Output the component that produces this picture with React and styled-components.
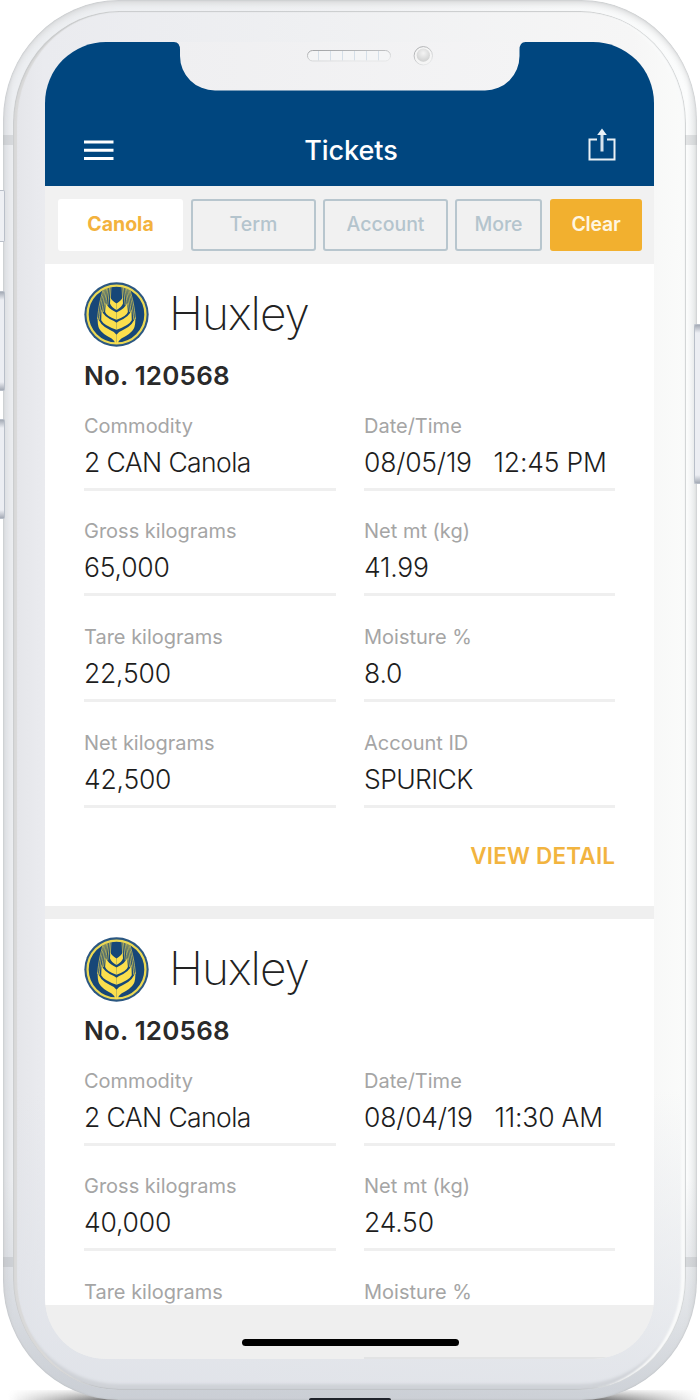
import React from "react";
import styled, { createGlobalStyle, css } from "styled-components";

const GlobalStyle = createGlobalStyle`
  *, *::before, *::after { box-sizing: border-box; }
  html, body { margin: 0; padding: 0; background: #fff; overflow: hidden; }
  body { font-family: Inter, "Liberation Sans", sans-serif; color: #222; }
`;

const Stage = styled.main`
  position: relative;
  width: 700px;
  height: 1400px;
  padding: 0 3px;
  overflow: hidden;
  isolation: isolate;
`;

const GroundShadow = styled.div`
  position: absolute;
  z-index: -2;
  left: 8px;
  right: 0;
  bottom: 0;
  height: 10px;
  background: linear-gradient(90deg, transparent 0, #777 14%, #555 50%, #777 86%, transparent 100%);
  mask-image: linear-gradient(180deg, rgba(0, 0, 0, 0.15), #000);
`;

const SideKey = styled.div`
  position: absolute;
  z-index: 1;
  top: ${(p) => p.$top}px;
  height: ${(p) => p.$height}px;
  border: 1px solid #b9bfc9;
  background: linear-gradient(180deg, #a4aab5 0, #eceef3 8px, #eceef3 calc(100% - 8px), #a4aab5 100%);
  ${(p) =>
    p.$right
      ? css`
          right: 0;
          width: 6px;
          border-right: 0;
          border-radius: 2px 0 0 2px;
        `
      : css`
          left: 0;
          width: 5px;
          border-left: 0;
          border-radius: 0 2px 2px 0;
        `}
  ${(p) => p.$flat && css`background: #eef0f4;`}
`;

const Chassis = styled.div`
  position: relative;
  width: 694px;
  height: 1400px;
  padding: 11px 11px 10px 10px;
  border-radius: 116px / 120px;
  background:
    linear-gradient(180deg, transparent 1180px, rgba(190, 195, 203, 0.75) 1400px),
    linear-gradient(90deg, #dfe1e5 0, #eceef1 10px, #f0f1f3 50%, #fbfcfc 684px, #e8eaeb 100%);
  box-shadow: inset 0 0 2px #aeb2b5, inset 0 3px 6px #d5d6d7;
`;

const AntennaBand = styled.i`
  position: absolute;
  top: ${(p) => p.$top}px;
  ${(p) => (p.$right ? "right: 0; width: 12px;" : "left: 0; width: 10px;")}
  height: 10px;
  background: rgba(160, 163, 166, 0.27);
`;

const Bezel = styled.div`
  height: 1379px;
  padding: 31px 30px 31px 32px;
  border-radius: 106px / 112px;
  background:
    linear-gradient(180deg, transparent 1080px, rgba(223, 226, 232, 0.88) 1379px),
    linear-gradient(90deg, #e4e5e9 0, #eaebef 30px, #eff0f2 45%, #f6f6f6 92%, #fafbfa 100%);
  box-shadow: inset 1px 1px 1px #c9cbcc, inset 5px 0 1px -1px #d9d9d9, inset -1px 0 1px #cfd2d3,
    inset -6px 0 2px -1px #f9fafa, inset 0 -1px 1px #babec3, inset 0 -7px 3px -1px #cfd2d7;
`;

const Screen = styled.div`
  position: relative;
  display: flex;
  flex-direction: column;
  width: 608.7px;
  height: 1317px;
  margin-left: 0.3px;
  border-radius: 61px;
  background: #efefef;
  overflow: hidden;
`;

const Notch = styled.svg`
  position: absolute;
  top: 0;
  left: 127px;
  width: 355px;
  height: 49px;
`;

const Header = styled.header`
  flex: none;
  display: grid;
  grid-template-columns: 32px 1fr 32px;
  align-items: center;
  height: 143.5px;
  padding: 71px 37px 0 38.7px;
  background: #00467f;
  color: #fff;
`;

const Title = styled.h1`
  margin: 4px 0 0 1px;
  font-size: 27px;
  font-weight: 550;
  line-height: 32px;
  letter-spacing: -0.05px;
  text-align: center;
`;

const MenuIcon = styled.svg`
  width: 30px;
  height: 21px;
  margin-top: 2px;
`;

const ShareIcon = styled.svg`
  width: 28px;
  height: 34px;
  margin: -9px 0 0 3.5px;
`;

const Filters = styled.nav`
  flex: none;
  display: flex;
  gap: 7px;
  height: 78px;
  padding: 13.5px 12.7px 13px;
  background: #f1f1f1;
`;

const Chip = styled.button`
  flex: none;
  width: ${(p) => p.$width}px;
  height: 52px;
  padding: 0 0 2px;
  border: 2px solid #b8c6ce;
  border-radius: 3px;
  background: transparent;
  color: #b4c4cd;
  font: 550 19.5px/24px Inter, sans-serif;
  letter-spacing: 0;
  ${(p) => p.$kind === "selected" && css`border-color: #fff; background: #fff; color: #f3b23d; font-weight: 700; margin-right: 1px;`}
  ${(p) => p.$kind === "action" && css`border-color: #f2b02f; background: #f2b02f; color: #fff6e2; font-weight: 600; margin-left: 1px; letter-spacing: -0.2px;`}
`;

const TicketList = styled.section`
  flex: none;
  display: flex;
  flex-direction: column;
  gap: 13px;
  height: 1041px;
  overflow: hidden;
`;

const Ticket = styled.article`
  flex: none;
  height: 645px;
  padding: 17.5px 38.7px 0 38.7px;
  background: #fff;
  &:first-child { height: 642px; }
  & + & { padding-top: 20.5px; }
  & + & { padding-top: 17.5px; }
`;

const Station = styled.div`
  display: flex;
  align-items: center;
  gap: 20px;
  height: 66px;
`;

const Emblem = styled.svg`
  flex: none;
  width: 65px;
  height: 65px;
`;

const StationName = styled.h2`
  margin: -2px 0 0;
  font-size: 46px;
  font-weight: 170;
  line-height: 56px;
  letter-spacing: -1px;
  color: #222;
`;

const TicketNumber = styled.h3`
  margin: 11.5px 0 21px;
  font-size: 26px;
  font-weight: 600;
  line-height: 34px;
  letter-spacing: 0.2px;
  color: #2a2a2a;
`;

const Fields = styled.dl`
  display: grid;
  grid-template-columns: 252px 251px;
  column-gap: 28px;
  row-gap: 28.7px;
  margin: 0;
`;

const Field = styled.div`
  height: 77px;
  border-bottom: 3px solid #efefef;
  white-space: pre;
`;

const Label = styled.dt`
  font-size: 20px;
  line-height: 24px;
  letter-spacing: 0;
  color: #a5a5a5;
`;

const Value = styled.dd`
  margin: 8.3px 0 0;
  font-size: 26.5px;
  font-weight: 320;
  line-height: 32px;
  letter-spacing: ${(p) => (p.$numeric ? "-0.2px" : "-0.6px")};
  color: #1d1d1d;
`;

const DetailLink = styled.a`
  display: block;
  margin-top: 33px;
  font-size: 22.5px;
  font-weight: 600;
  line-height: 30px;
  letter-spacing: 0.2px;
  text-align: right;
  color: #f2b43f;
`;

const HomeBar = styled.footer`
  flex: 1;
  display: flex;
  flex-direction: column;
  align-items: center;
  padding-top: 34.5px;
  background: #efefef;
`;

const HomeIndicator = styled.div`
  width: 217px;
  height: 7px;
  margin-left: 1px;
  border-radius: 4px;
  background: #000;
`;

const HiddenRule = styled.div`
  align-self: flex-end;
  width: 290px;
  height: 2px;
  margin-top: 10.5px;
  background: #e2e3e4;
`;

const Port = styled.div`
  position: absolute;
  left: 309px;
  bottom: 0;
  width: 82px;
  height: 2px;
  border-radius: 5px 5px 0 0;
  background: #20242c;
`;

const awns = ["M42 114C44 78 52 48 58 26", "M47 116C49 80 57 45 62 22", "M55 92C58 64 62 40 66 20", "M60 92C63 64 67 38 70 18", "M67 72C69 52 72 34 74 17", "M73 72C75 52 77 34 79 16", "M81 54L83 15"];

function WheatEmblem() {
  const half = (
    <>
      <path d="M81 47Q85 58 100 66V86Q84 78 80 66Z" />
      <path d="M67 64Q72 81 100 94V116Q70 106 65 92Z" />
      <path d="M54 84Q58 106 92 120L100 125V147Q61 134 53 118Z" />
      <path d="M42 106Q46 131 80 148Q95 154 100 162V190H96Q94 180 85 174Q55 159 47 144Q41 132 42 106Z" />
      {awns.map((d) => (
        <path key={d} d={d} fill="none" stroke="#fbdf4d" strokeWidth="2" />
      ))}
    </>
  );
  return (
    <Emblem viewBox="0 0 200 200" role="img" aria-label="Wheat emblem">
      <circle cx="100" cy="100" r="99" fill="#2b5782" />
      <circle cx="100" cy="100" r="89" fill="#174778" stroke="#ecd954" strokeWidth="7" />
      <g fill="#fbdf4d">
        {half}
        <g transform="matrix(-1 0 0 1 200 0)">{half}</g>
      </g>
    </Emblem>
  );
}

function NotchShape() {
  return (
    <Notch viewBox="0 0 355 49">
      <defs>
        <linearGradient id="notchFill" x1="0" x2="1">
          <stop offset="0" stopColor="#efeff1" />
          <stop offset="1" stopColor="#f4f4f5" />
        </linearGradient>
        <linearGradient id="rim" x1="0" y1="0" x2="0.6" y2="1">
          <stop offset="0" stopColor="#a2a4a6" />
          <stop offset="1" stopColor="#e6e7e8" />
        </linearGradient>
        <radialGradient id="lens" cx="0.5" cy="0.35" r="0.65">
          <stop offset="0" stopColor="#f4f4f4" />
          <stop offset="1" stopColor="#cfd0d0" />
        </radialGradient>
      </defs>
      <path d="M0 0H2Q8 0 8 8V14A35 34.5 0 0 0 43 48.5H313A34.5 34.5 0 0 0 347.5 14V8Q347.5 0 353.5 0H355Z" fill="url(#notchFill)" />
      <rect x="135.5" y="8.5" width="83" height="10.5" rx="5.2" fill="#f4f5f6" />
      <path d="M146.5 9V18.5M158.5 9V18.5M170.5 9V18.5M182.5 9V18.5M194.5 9V18.5M206.5 9V18.5" stroke="#d5dfe8" />
      <rect x="135.5" y="8.5" width="83" height="10.5" rx="5.2" fill="none" stroke="url(#rim)" />
      <circle cx="251.3" cy="13.8" r="9.2" fill="#f5f5f5" stroke="url(#rim)" />
      <circle cx="251.3" cy="13.2" r="6.6" fill="url(#lens)" />
    </Notch>
  );
}

const filters = [
  { text: "Canola", width: 125, kind: "selected" },
  { text: "Term", width: 125 },
  { text: "Account", width: 125 },
  { text: "More", width: 87 },
  { text: "Clear", width: 92, kind: "action" },
];

const tickets = [
  {
    id: 1,
    fields: [
      ["Commodity", "2 CAN Canola"],
      ["Date/Time", "08/05/19   12:45 PM"],
      ["Gross kilograms", "65,000"],
      ["Net mt (kg)", "41.99"],
      ["Tare kilograms", "22,500"],
      ["Moisture %", "8.0"],
      ["Net kilograms", "42,500"],
      ["Account ID", "SPURICK"],
    ],
  },
  {
    id: 2,
    fields: [
      ["Commodity", "2 CAN Canola"],
      ["Date/Time", "08/04/19   11:30 AM"],
      ["Gross kilograms", "40,000"],
      ["Net mt (kg)", "24.50"],
      ["Tare kilograms", ""],
      ["Moisture %", ""],
    ],
  },
];

export default function App() {
  return (
    <Stage>
      <GlobalStyle />
      <GroundShadow />
      <Chassis>
        <AntennaBand $top={134.5} />
        <AntennaBand $top={134.5} $right />
        <AntennaBand $top={1257} />
        <AntennaBand $top={1257} $right />
        <Bezel>
          <Screen>
            <Header>
              <MenuIcon viewBox="0 0 30 21">
                <path d="M0 2H29.5M0 10.2H29.5M0 18.4H29.5" stroke="#fff" strokeWidth="3" />
              </MenuIcon>
              <Title>Tickets</Title>
              <ShareIcon viewBox="0 0 28 34" fill="none" stroke="#eaf1f6" strokeWidth="2">
                <path d="M9 11.5H1.5V31.5H26.5V11.5H19" />
                <path d="M14 23.5V5" strokeWidth="3" stroke="#d5e2ec" />
                <path d="M14 0.5L18.8 7H9.2Z" fill="#eaf1f6" stroke="none" />
              </ShareIcon>
            </Header>
            <Filters>
              {filters.map((f) => (
                <Chip key={f.text} $width={f.width} $kind={f.kind}>{f.text}</Chip>
              ))}
            </Filters>
            <TicketList>
              {tickets.map((t) => (
                <Ticket key={t.id}>
                  <Station>
                    <WheatEmblem />
                    <StationName>Huxley</StationName>
                  </Station>
                  <TicketNumber>No. 120568</TicketNumber>
                  <Fields>
                    {t.fields.map(([label, value]) => (
                      <Field key={label}>
                        <Label>{label}</Label>
                        <Value $numeric={/^[\d.,/]{3}/.test(value)}>{value}</Value>
                      </Field>
                    ))}
                  </Fields>
                  {t.id === 1 && <DetailLink>VIEW DETAIL</DetailLink>}
                </Ticket>
              ))}
            </TicketList>
            <HomeBar>
              <HomeIndicator />
              <HiddenRule />
            </HomeBar>
            <NotchShape />
          </Screen>
        </Bezel>
      </Chassis>
      <SideKey $top={190} $height={52} $flat />
      <SideKey $top={291} $height={100} />
      <SideKey $top={419} $height={100} />
      <SideKey $top={324} $height={160} $right />
      <Port />
    </Stage>
  );
}
